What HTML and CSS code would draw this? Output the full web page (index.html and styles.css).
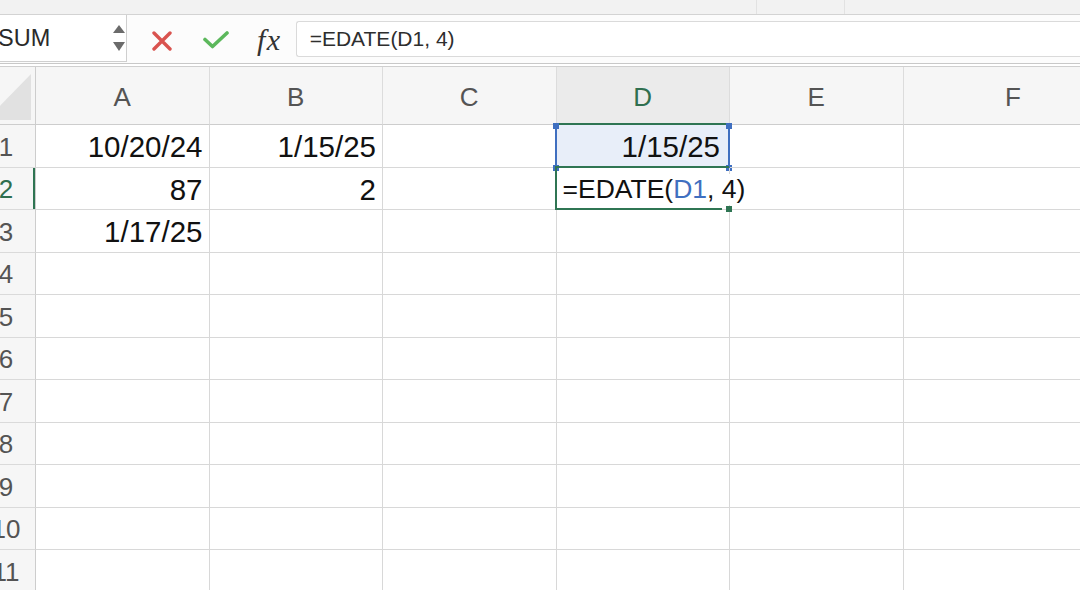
FILE: index.html
```html
<!DOCTYPE html>
<html>
<head>
<meta charset="utf-8">
<link rel="stylesheet" href="styles.css">
</head>
<body>
<div class="strip"><div class="strip-tabs"></div></div>
<div class="fbar">
  <div class="namebox">
    <span class="nb-text">SUM</span>
    <svg class="spin" width="14" height="30" viewBox="0 0 14 30"><polygon points="7,2 13,10 1,10" fill="#6b6b6b"/><polygon points="1,19 13,19 7,28" fill="#6b6b6b"/></svg>
  </div>
  <svg class="ic-x" width="20" height="20" viewBox="0 0 20 20"><path d="M2 2 L18 18 M18 2 L2 18" stroke="#d9534f" stroke-width="3.4" stroke-linecap="round"/></svg>
  <svg class="ic-ok" width="26" height="18" viewBox="0 0 26 18"><path d="M2 8.5 L9.5 15.5 L24 2" fill="none" stroke="#5cb85c" stroke-width="3.6" stroke-linecap="round" stroke-linejoin="round"/></svg>
  <span class="fx">fx</span>
  <div class="finput">=EDATE(D1, 4)</div>
</div>
<div class="sheet">
  <div class="corner"></div>
  <div class="ch">A</div>
  <div class="ch">B</div>
  <div class="ch">C</div>
  <div class="ch on">D</div>
  <div class="ch">E</div>
  <div class="ch">F</div>

  <div class="rh">1</div>
  <div class="c">10/20/24</div>
  <div class="c">1/15/25</div>
  <div class="c"></div>
  <div class="c ref">1/15/25<span class="rb"><i class="k tl"></i><i class="k tr"></i><i class="k bl"></i><i class="k br"></i></span></div>
  <div class="c"></div>
  <div class="c"></div>

  <div class="rh on">2</div>
  <div class="c">87</div>
  <div class="c">2</div>
  <div class="c"></div>
  <div class="c edit"><span class="ed">=EDATE(<span class="rf">D1</span>, 4)</span><i class="gt"></i><i class="gb"></i><i class="fh"></i></div>
  <div class="c"></div>
  <div class="c"></div>

  <div class="rh">3</div>
  <div class="c">1/17/25</div>
  <div class="c"></div><div class="c"></div><div class="c"></div><div class="c"></div><div class="c"></div>

  <div class="rh">4</div>
  <div class="c"></div><div class="c"></div><div class="c"></div><div class="c"></div><div class="c"></div><div class="c"></div>
  <div class="rh">5</div>
  <div class="c"></div><div class="c"></div><div class="c"></div><div class="c"></div><div class="c"></div><div class="c"></div>
  <div class="rh">6</div>
  <div class="c"></div><div class="c"></div><div class="c"></div><div class="c"></div><div class="c"></div><div class="c"></div>
  <div class="rh">7</div>
  <div class="c"></div><div class="c"></div><div class="c"></div><div class="c"></div><div class="c"></div><div class="c"></div>
  <div class="rh">8</div>
  <div class="c"></div><div class="c"></div><div class="c"></div><div class="c"></div><div class="c"></div><div class="c"></div>
  <div class="rh">9</div>
  <div class="c"></div><div class="c"></div><div class="c"></div><div class="c"></div><div class="c"></div><div class="c"></div>
  <div class="rh">10</div>
  <div class="c"></div><div class="c"></div><div class="c"></div><div class="c"></div><div class="c"></div><div class="c"></div>
  <div class="rh">11</div>
  <div class="c"></div><div class="c"></div><div class="c"></div><div class="c"></div><div class="c"></div><div class="c"></div>
</div>
</body>
</html>
```
FILE: styles.css
```css
html, body {
  margin: 0;
  padding: 0;
}
body {
  width: 1080px;
  height: 590px;
  overflow: hidden;
  background: #fff;
  font-family: "Liberation Sans", Arial, sans-serif;
}
.strip {
  height: 15px;
  box-sizing: border-box;
  background: #f2f2f2;
  border-bottom: 1px solid #d3d3d3;
  display: flex;
}
.strip-tabs {
  margin-left: 756px;
  width: 87px;
  border-left: 1px solid #e2e2e2;
  border-right: 1px solid #e2e2e2;
}
.fbar {
  height: 49px;
  box-sizing: border-box;
  border-bottom: 1px solid #c8c8c8;
  display: flex;
  align-items: center;
  background: #fcfcfc;
}
.namebox {
  align-self: stretch;
  width: 127px;
  box-sizing: border-box;
  margin-bottom: 1px;
  border-right: 1px solid #cfcfcf;
  border-bottom: 1px solid #cfcfcf;
  background: #fff;
  display: flex;
  align-items: center;
  justify-content: space-between;
}
.nb-text {
  font-size: 23.5px;
  color: #2a2a2a;
  margin-left: -2px;
}
.ic-x {
  margin-left: 25px;
  margin-top: 4px;
}
.ic-ok {
  margin-left: 31px;
  margin-top: 2px;
}
.fx {
  margin-left: 28px;
  font-family: "Liberation Serif", "Times New Roman", serif;
  font-style: italic;
  font-size: 30px;
  letter-spacing: 1.5px;
  color: #333;
  margin-top: 2px;
}
.finput {
  flex: 1;
  margin-left: 14px;
  height: 36px;
  box-sizing: border-box;
  border: 1px solid #dadada;
  border-right: none;
  border-radius: 3px 0 0 3px;
  background: #fff;
  font-size: 21px;
  color: #2e2e2e;
  padding-left: 13px;
  display: flex;
  align-items: center;
}
.sheet {
  margin-top: 2px;
  margin-left: -23px;
  border-top: 1px solid #cfcfcf;
  display: grid;
  grid-template-columns: 59px repeat(5, 173.5px) 220px;
  grid-template-rows: 58px;
  grid-auto-rows: 42.5px;
}
.corner {
  position: relative;
  background: #f6f6f6;
  border-right: 1px solid #cdcdcd;
  border-bottom: 1px solid #cdcdcd;
}
.corner::after {
  content: "";
  position: absolute;
  right: 4px;
  bottom: 4px;
  width: 45px;
  height: 46px;
  background: #e1e1e1;
  clip-path: polygon(100% 0, 100% 100%, 0 100%);
}
.ch {
  background: #f6f6f6;
  border-right: 1px solid #dcdcdc;
  border-bottom: 1px solid #cdcdcd;
  box-sizing: border-box;
  display: flex;
  align-items: center;
  justify-content: center;
  padding-top: 4px;
  font-size: 26px;
  color: #545454;
}
.ch.on {
  background: #ebebeb;
  color: #2f6f4f;
  border-bottom: 2px solid #2f7553;
  padding-top: 5px;
}
.rh {
  background: #f6f6f6;
  border-right: 1px solid #cdcdcd;
  border-bottom: 1px solid #dadada;
  box-sizing: border-box;
  display: flex;
  align-items: center;
  justify-content: center;
  padding-top: 3px;
  font-size: 26px;
  color: #545454;
}
.rh.on {
  color: #2f6f4f;
  box-shadow: inset -2px 0 0 #2f7553;
}
.c {
  position: relative;
  border-right: 1px solid #d8d8d8;
  border-bottom: 1px solid #d8d8d8;
  box-sizing: border-box;
  display: flex;
  align-items: center;
  justify-content: flex-end;
  padding: 3px 6px 0 0;
  font-size: 29.5px;
  color: #111;
  white-space: nowrap;
}
.c.ref {
  background: #e8eef9;
  padding-right: 9px;
}
.rb {
  position: absolute;
  left: -2px;
  right: -1px;
  top: 0;
  bottom: 0;
  border-left: 2px solid #3f6fc0;
  border-right: 2px solid #3f6fc0;
}
.k {
  position: absolute;
  width: 6px;
  height: 6px;
  background: #3f6fc0;
}
.tl { left: -4px; top: -2px; }
.tr { right: -4px; top: -2px; }
.bl { left: -4px; bottom: -4px; }
.br { right: -4px; bottom: -4px; }
.c.edit {
  justify-content: flex-start;
  padding: 3px 0 0 6px;
  font-size: 26.5px;
  z-index: 2;
}
.ed {
  position: relative;
  background: #fff;
  color: #111;
  z-index: 1;
}
.rf {
  color: #3f6fc0;
}
.gt {
  position: absolute;
  left: -2px;
  right: 0;
  top: -2px;
  height: 2px;
  background: #2f7553;
}
.gb {
  position: absolute;
  left: -2px;
  right: 7px;
  top: 0;
  bottom: -1px;
  border-left: 2px solid #2f7553;
  border-bottom: 2px solid #2f7553;
}
.fh {
  position: absolute;
  right: -3px;
  bottom: -3px;
  width: 6px;
  height: 6px;
  background: #2f7553;
  z-index: 2;
}
```
